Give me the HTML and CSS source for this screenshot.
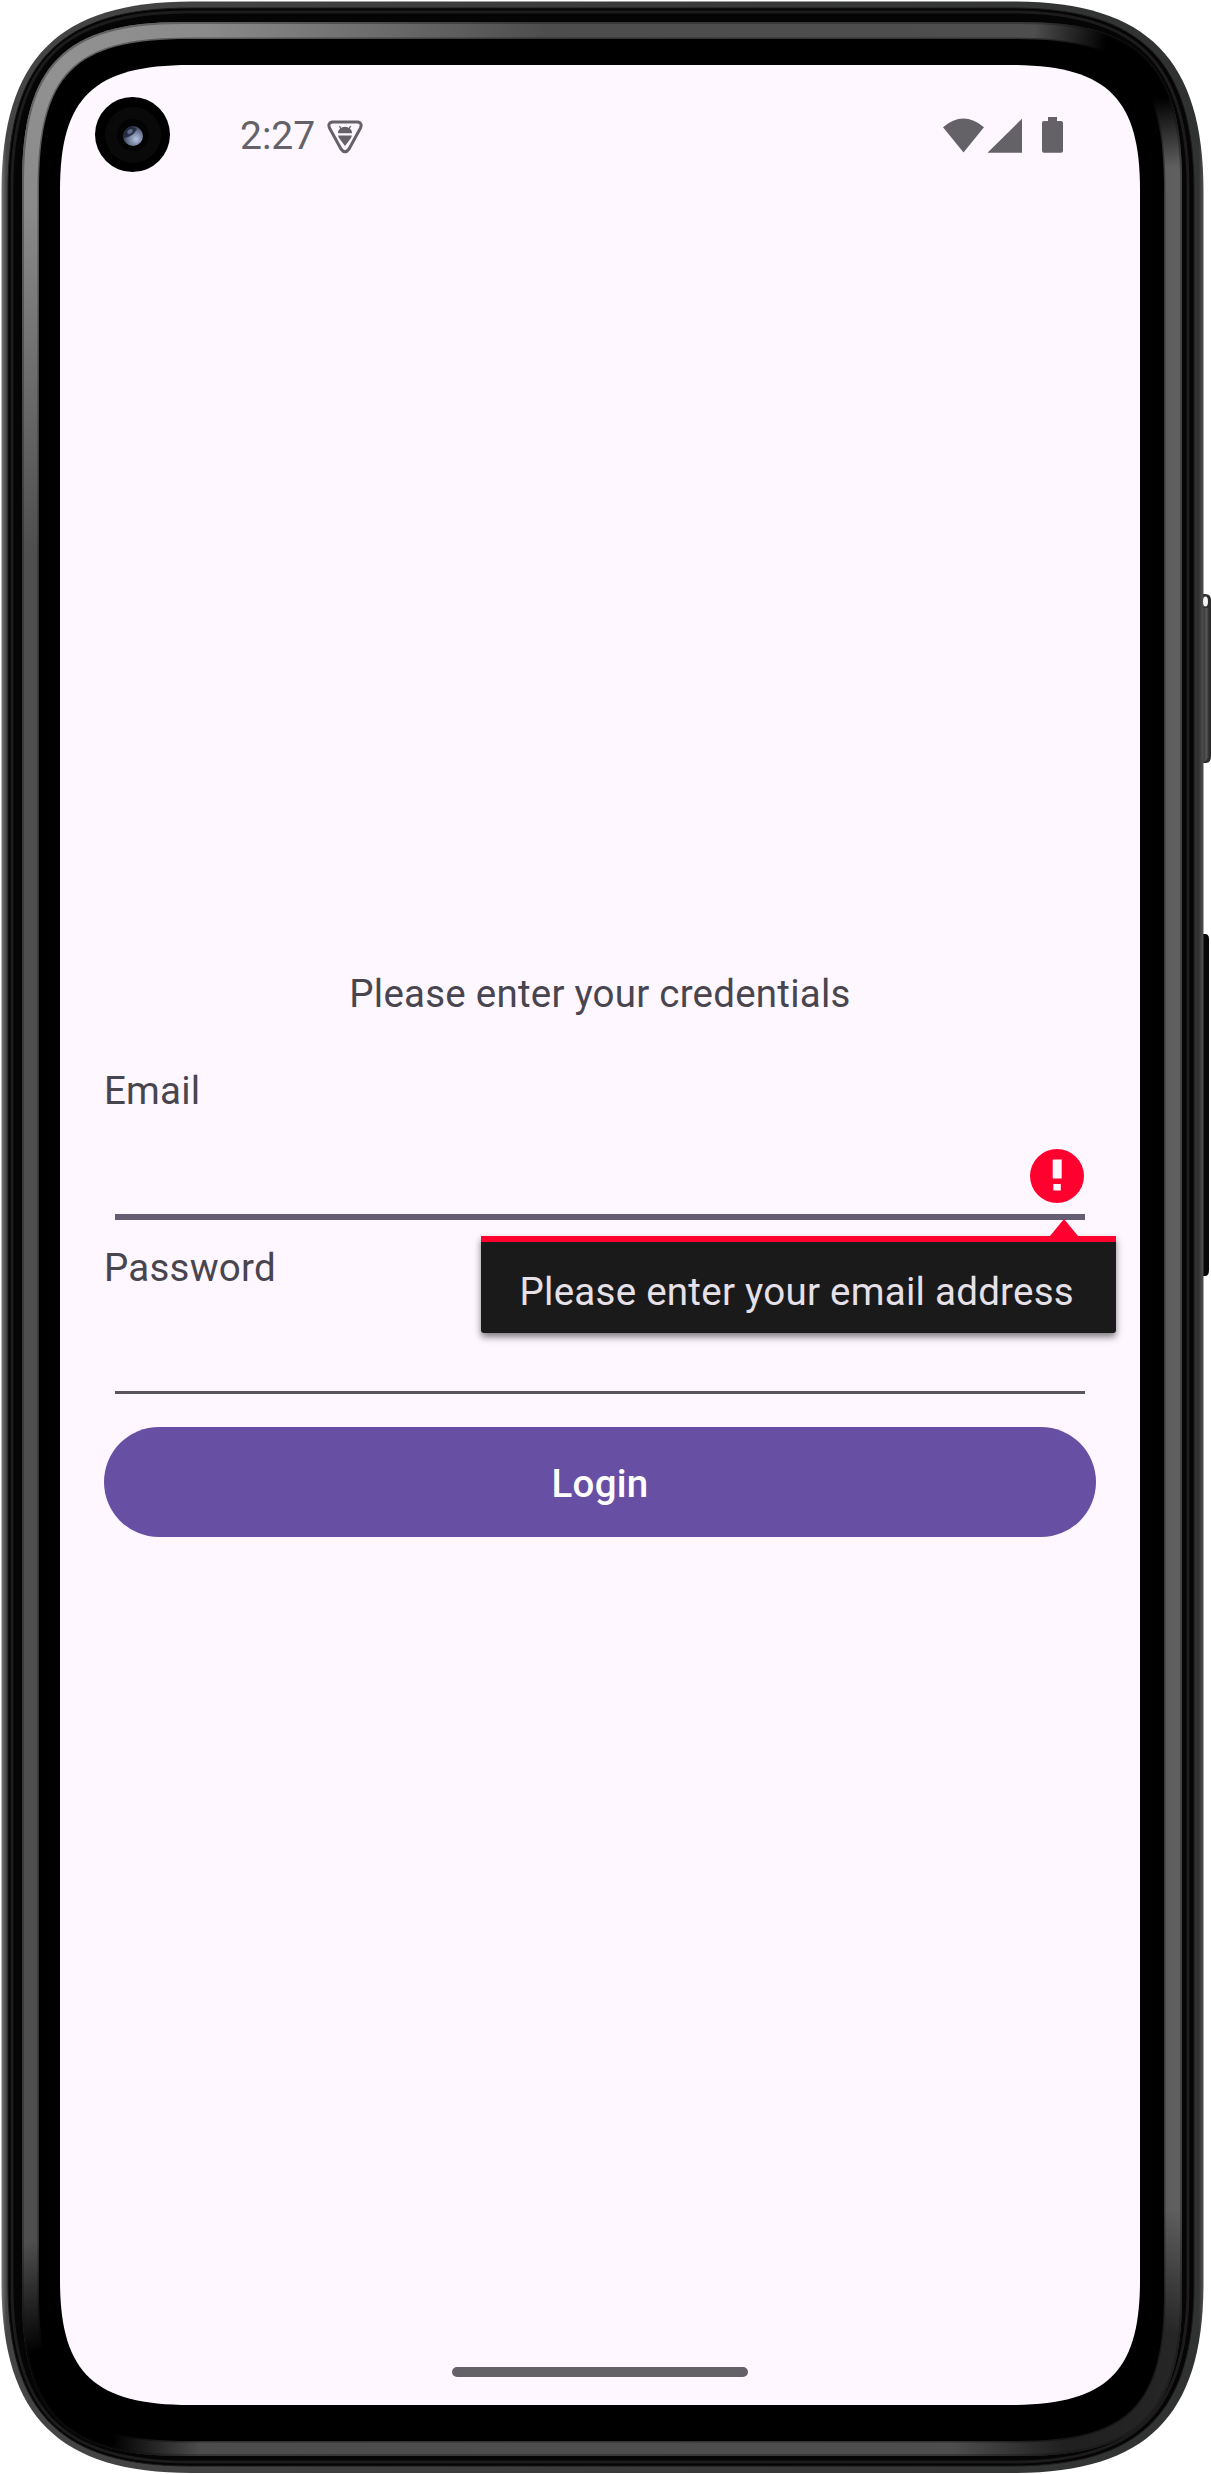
FILE: index.html
```html
<!DOCTYPE html>
<html lang="en">
<head>
<meta charset="utf-8">
<title>Login</title>
<link rel="stylesheet" href="styles.css">
</head>
<body>
<div class="device">
  <svg class="frame" viewBox="0 0 1211 2474" aria-hidden="true">
    <defs>
      <linearGradient id="rim" x1="0" x2="1" y1="0" y2="0">
        <stop offset="0" stop-color="#777873"/><stop offset=".004" stop-color="#444544"/>
        <stop offset=".5" stop-color="#3b3b3b"/><stop offset=".996" stop-color="#303231"/><stop offset="1" stop-color="#505050"/>
      </linearGradient>
      <linearGradient id="shine" x1="0" x2="1" y1="0" y2="0">
        <stop offset="0" stop-color="#505050"/><stop offset=".03" stop-color="#4c4c4c"/><stop offset=".9" stop-color="#4e4e4e"/><stop offset="1" stop-color="#606060"/>
      </linearGradient>
      <radialGradient id="glow" gradientUnits="userSpaceOnUse" cx="70" cy="70" r="480">
        <stop offset="0" stop-color="#929292"/><stop offset=".3" stop-color="#8a8a8a"/><stop offset="1" stop-color="#8a8a8a" stop-opacity="0"/>
      </radialGradient>
      <radialGradient id="shade"><stop offset="0"/><stop offset=".42"/><stop offset="1" stop-opacity="0"/></radialGradient>
      <linearGradient id="key" x1="0" x2="1" y1="0" y2="0">
        <stop offset="0" stop-color="#333"/><stop offset=".5" stop-color="#555"/><stop offset="1" stop-color="#222"/>
      </linearGradient>
      <radialGradient id="lens" cx=".65" cy=".65" r=".7">
        <stop offset="0" stop-color="#b3c3df"/><stop offset=".6" stop-color="#65718d"/><stop offset="1" stop-color="#262a3c"/>
      </radialGradient>
      <clipPath id="band"><path d="M22,182C22,65 65,22 182,22H1022C1139,22 1182,65 1182,182V2296C1182,2413 1139,2456 1022,2456H182C65,2456 22,2413 22,2296Z"/></clipPath>
    </defs>
    <path fill="#2c2d2c" d="M1200,594h5q6,0 6,6v156q0,7-5,7h-6Z"/>
    <path fill="url(#key)" d="M1203,608h7v147l-4,6h-3Z"/>
    <path fill="#070707" d="M1200,934h5q4,0 4,5v331q0,6-4,6h-5Z"/>
    <path fill="url(#rim)" d="M1.5,191.5C1.5,58.5 58.5,1.5 191.5,1.5H1013.5C1146.500,1.5 1203.500,58.5 1203.500,191.500V2283C1203.500,2416 1146.500,2473 1013.500,2473H191.500C58.5,2473 1.5,2416 1.5,2283Z"/>
    <ellipse cx="1205.5" cy="601.5" rx="2.500" ry="5" fill="#f4f4f4"/>
    <path fill="#050505" stroke="#191919" d="M8,190C8,61 61,8 190,8H1012C1141,8 1194,61 1194,190V2284C1194,2413 1141,2466 1012,2466H190C61,2466 8,2413 8,2284Z"/>
    <path fill="none" stroke="#1d1b1b" stroke-width="3" d="M12,187C12,63 63,12 187,12H1013C1137,12 1188,63 1188,187V2287C1188,2411 1137,2462 1013,2462H187C63,2462 12,2411 12,2287Z"/>
    <g clip-path="url(#band)">
      <rect x="22" y="22" width="1160" height="2434" fill="url(#shine)"/>
      <rect x="22" y="22" width="600" height="600" fill="url(#glow)"/>
      <ellipse cx="1158" cy="48" rx="125" ry="120" fill="url(#shade)"/>
      <ellipse cx="50" cy="2430" rx="150" ry="190" fill="url(#shade)"/>
      <ellipse cx="1140" cy="2415" rx="190" ry="210" fill="url(#shade)" opacity=".6"/>
      <path fill="none" stroke="#111" stroke-opacity=".35" stroke-width="4" d="M22,182C22,65 65,22 182,22H1022C1139,22 1182,65 1182,182V2296C1182,2413 1139,2456 1022,2456H182C65,2456 22,2413 22,2296Z"/>
    </g>
    <path stroke="#000" stroke-opacity=".35" stroke-width="3" d="M39,189C39,74 74,39 189,39H1014C1129,39 1164,74 1164,189V2291C1164,2406 1129,2441 1014,2441H189C74,2441 39,2406 39,2291Z"/>
    <path fill="#fef7ff" d="M60,190C60,98 93,65 190,65H1010C1107,65 1140,98 1140,190V2280C1140,2372 1107,2405 1010,2405H190C93,2405 60,2372 60,2280Z"/>
    <circle cx="132.500" cy="134.500" r="37.500"/>
    <circle cx="133" cy="135" r="28" fill="#090909"/>
    <circle cx="133" cy="135" r="16" fill="#030303"/>
    <circle cx="133" cy="136" r="10" fill="url(#lens)"/>
    <path d="M124,138q9-1 13-9l-6-3q-8 4-7 12Z" fill="#20263a" opacity=".85"/>
    <ellipse cx="130" cy="131.500" rx="3" ry="2" transform="rotate(-30 130 131.500)" fill="#5f6b8a"/>
  </svg>

  <main class="screen">
    <header class="status">
      <span class="clock">2:27</span>
      <svg class="debug" viewBox="0 0 36 34">
        <path d="M5 2H31Q35.500 3 33.500 8L22 29Q18 34.500 14 29L2.500 8Q.5 3 5 2Z" fill="none" stroke="#656267" stroke-width="3" stroke-linejoin="round"/>
        <path d="M11 13.200A7 6.500 0 0 1 25 13.200Z M11 15.500H25L24 18L18 26L12 18Z" fill="#656267"/>
        <path d="M14 9L12.500 6M22 9L23.500 6" stroke="#656267" stroke-width="1.300"/>
      </svg>
      <span class="spacer"></span>
      <svg class="system" viewBox="0 0 120 36" fill="#656267">
        <path d="M0 10.200Q20.300-7 41 10.200L20.500 35.500Z"/>
        <path d="M44.500 35.700L79 1.700V35.700Z"/>
        <path d="M105 0h9v4h4q2 0 2 2v27.700q0 2-2 2h-17q-2 0-2-2V6q0-2 2-2h4Z"/>
      </svg>
    </header>

    <form class="login">
      <p class="prompt">Please enter your credentials</p>
      <label class="label">Email</label>
      <div class="field field-active">
        <svg class="error-icon" viewBox="0 0 54 54">
          <circle cx="27" cy="27" r="27" fill="#ff002f"/>
          <path d="M22.700 10.500h9v19h-9ZM23.300 35h7.500v6.500h-7.500Z" fill="#fef7ff"/>
        </svg>
        <div class="error-popup">Please enter your email address</div>
      </div>
      <label class="label">Password</label>
      <div class="field"></div>
      <button class="submit" type="button">Login</button>
    </form>
    <div class="home-bar"></div>
  </main>
</div>
</body>
</html>
```
FILE: styles.css
```css
* { box-sizing: border-box; }
body {
  margin: 0;
  background: #fff;
  font-family: Roboto, "Liberation Sans", sans-serif;
  color: #49454f;
}
.device {
  position: relative;
  width: 1211px;
  height: 2474px;
  padding: 65px 71px 69px 60px;
  overflow: hidden;
}
.frame {
  position: absolute;
  inset: 0;
  width: 1211px;
  height: 2474px;
}
.screen {
  position: relative;
  display: flex;
  flex-direction: column;
  height: 2340px;
}
.status {
  display: flex;
  align-items: flex-start;
  height: 903px;
  padding: 52px 77px 0 180px;
}
.clock {
  width: 87px;
  font-size: 39px;
  line-height: 40px;
  color: #656267;
  margin-top: -1px;
}
.debug { width: 36px; height: 34px; margin-top: 3px; }
.spacer { flex: 1; }
.system { width: 120px; height: 36px; }
.login {
  display: flex;
  flex-direction: column;
  padding: 0 44px;
  font-size: 38.5px;
  line-height: 52px;
  letter-spacing: .23px;
}
.prompt { margin: 0 0 45px; text-align: center; }
.label { display: block; }
.field {
  position: relative;
  height: 100px;
  margin: 0 11px 33px;
  border-bottom: 3px solid #59555f;
}
.field-active {
  height: 103px;
  margin-bottom: 22px;
  border-bottom: 6px solid #655d74;
  display: flex;
  justify-content: flex-end;
  padding: 31.500px 1px 0 0;
}
.error-icon { width: 54px; height: 54px; }
.error-popup {
  position: absolute;
  left: 366px;
  top: 118.500px;
  width: 635px;
  height: 97px;
  padding-top: 24.500px;
  padding-left: 38.500px;
  border-top: 6px solid #ff002f;
  border-radius: 0 0 3px 3px;
  background: #1a1a1a;
  color: #e6e0e9;
  letter-spacing: .26px;
  white-space: nowrap;
  box-shadow: 0 4px 7px rgba(0, 0, 0, .5);
}
.error-popup::before {
  content: "";
  position: absolute;
  left: 568.500px;
  top: -22.500px;
  border: 14px solid transparent;
  border-top: 0;
  border-bottom: 17px solid #ff002f;
}
.submit {
  height: 110px;
  padding: 3px 0 0;
  border: 0;
  border-radius: 55px;
  background: #6750a4;
  color: #fff;
  font: 500 38.5px/52px Roboto, "Liberation Sans", sans-serif;
  letter-spacing: .28px;
}
.home-bar {
  width: 296px;
  height: 10px;
  margin: auto auto 28px;
  border-radius: 5px;
  background: #656267;
}
```
